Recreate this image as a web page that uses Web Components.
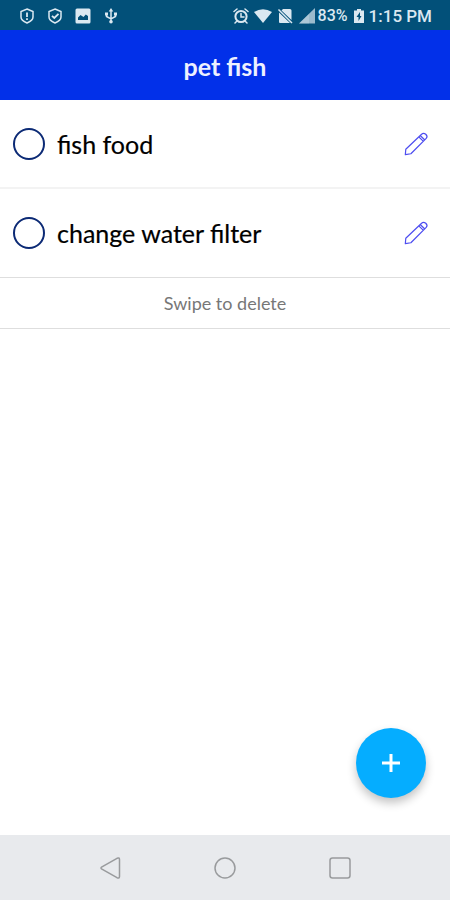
<!DOCTYPE html>
<html lang="en">
<head>
<meta charset="utf-8">
<meta name="viewport" content="width=device-width, initial-scale=1">
<title>pet fish</title>
<style>
html, body { height: 100%; margin: 0; }
body { background: #fff; font-family: Lato, "Open Sans", sans-serif; color: #000; }
</style>
</head>
<body>
<pet-app></pet-app>
<script>
const define = (name, html) => {
  const template = document.createElement('template');
  template.innerHTML = html;
  customElements.define(name, class extends HTMLElement {
    constructor() {
      super();
      this.attachShadow({ mode: 'open' }).append(template.content.cloneNode(true));
    }
  });
};

define('status-bar', `
<style>
:host { display: flex; justify-content: space-between; align-items: center; height: 30px; padding: 2px 18px 0 19px; box-sizing: border-box; background: #025079; color: #dbe8f1; font: 500 17px/20px Roboto, sans-serif; }
div { display: flex; align-items: center; }
.left { gap: 12px; }
svg { display: block; width: 16px; height: 16px; fill: none; stroke: currentColor; stroke-width: 1.5; }
.right svg { margin-right: 5px; }
.right .wifi { width: 18px; }
.right .signal { margin-right: 3px; }
.right .battery { width: 10px; margin: 0 5px 0 6px; }
.right .sim { margin-right: 6px; }
.pct { font-size: 16px; }
</style>
<div class="left">
  <svg viewBox="0 0 16 16"><path d="M8 1 14 3.5V9Q14 12.500 8 15Q2 12.500 2 9V3.500Z"/><path d="M8 4.500V9M8 10.300V12" stroke-width="1.800"/></svg>
  <svg viewBox="0 0 16 16"><path d="M8 1 14 3.500V9Q14 12.500 8 15Q2 12.500 2 9V3.500Z"/><path d="M5 7.800 7.300 10 11.500 5.800" stroke-width="1.800"/></svg>
  <svg viewBox="0 0 16 16"><path fill="currentColor" stroke="none" fill-rule="evenodd" d="M2 .5H14Q15.500 .5 15.500 2V14Q15.500 15.500 14 15.500H2Q.5 15.500 .5 14V2Q.5 .5 2 .5ZM3 12H13V8L10.800 6.500 8.500 9 5.500 7 3 9.500Z"/></svg>
  <svg viewBox="0 0 16 16"><path d="M8 2.500V13M3.500 6V8.500L8 11 12.500 8.500V6"/><path fill="currentColor" stroke="none" d="M8 0 10.300 3.500H5.700ZM2 4.500H5V7.500H2ZM11 4.500H14V7.500H11Z"/><circle cx="8" cy="13.800" r="1.800" fill="currentColor" stroke="none"/></svg>
</div>
<div class="right">
  <svg viewBox="0 0 16 16" stroke-linecap="round"><circle cx="8" cy="8.500" r="5.600" style="stroke-width:2"/><path d="M8 5.500V9H11M1 3.500 4 1M15 3.500 12 1M3.500 13.500 2 15M12.500 13.500 14 15"/></svg>
  <svg class="wifi" viewBox="0 0 18 16"><path fill="currentColor" stroke="none" d="M0 4Q9-1.500 18 4L9 15Z"/></svg>
  <svg class="sim" viewBox="0 0 16 16"><path fill="currentColor" stroke="none" d="M6 1H13Q14.500 1 14.500 2.500V12L4.500 2.500ZM2 4.500 13 15H3Q2 15 2 14Z"/><path d="M1.500 1.500 15 15"/></svg>
  <svg class="signal" viewBox="0 0 16 16"><path fill="currentColor" stroke="none" opacity=".7" d="M0 15.500 16 0V15.500Z"/><path fill="currentColor" stroke="none" d="M0 15.500 10 6V15.500Z" opacity=".3"/></svg>
  <span class="pct">83%</span>
  <svg class="battery" viewBox="0 0 10 16"><path fill="currentColor" stroke="none" fill-rule="evenodd" d="M3 1H7V2.500H10V15H0V2.500H3ZM6 4 2.500 9H4.500V13L7.500 8H6Z"/></svg>
  <span>1:15 PM</span>
</div>`);

define('title-bar', `
<style>
:host { display: flex; align-items: center; justify-content: center; height: 70px; background: #0230e9; color: #edf1ff; }
h1 { margin: 0; padding-top: 2px; font-size: 25px; line-height: 32px; font-weight: 700; }
</style>
<h1><slot></slot></h1>`);

define('task-row', `
<style>
:host { display: flex; align-items: center; justify-content: space-between; box-sizing: border-box; padding: 28px 20px 28px 13px; border-bottom: 1px solid #dedede; }
:host([divided]) { padding-bottom: 27px; border-bottom: 2px solid #f3f3f3; }
label { display: flex; align-items: center; gap: 12px; font-size: 25px; line-height: 32px; -webkit-text-stroke: 0.2px; }
input { appearance: none; width: 32px; height: 32px; margin: 0; border: 2px solid #0c2a75; border-radius: 50%; background: #fff; }
input:checked { background: #0230e9; box-shadow: inset 0 0 0 6px #fff; }
button { display: grid; place-items: center; width: 28px; height: 28px; padding: 0; border: 0; background: none; color: #4d4df0; }
svg { display: block; width: 26px; height: 26px; fill: none; stroke: currentColor; stroke-width: 1.3; stroke-linejoin: round; }
</style>
<label><input type="checkbox"><span><slot></slot></span></label>
<button type="button" aria-label="Edit"><svg viewBox="0 0 28 28"><path d="M2.500 25.500 3 19.700 20 3.500Q22 1.500 24.500 3.500Q27 6 25 8L8.500 24.500ZM17 6.300 22 11.200M18.500 4.800 23.500 9.700"/></svg></button>`);

define('swipe-hint', `
<style>
:host { display: block; padding: 13px 0; border-bottom: 1px solid #dedede; text-align: center; font-size: 18px; line-height: 24px; color: #777; }
</style>
<slot></slot>`);

define('add-button', `
<style>
:host { position: absolute; right: 24px; bottom: 37px; }
button { display: grid; place-items: center; width: 70px; height: 70px; padding: 0; border: 0; border-radius: 50%; background: #05adff; color: #fff; box-shadow: 0 5px 10px rgba(0,0,0,.24); }
svg { width: 20px; height: 20px; fill: none; stroke: currentColor; stroke-width: 3; }
</style>
<button type="button" aria-label="Add item"><svg viewBox="0 0 20 20"><path d="M10 1V19M1 10H19"/></svg></button>`);

define('nav-bar', `
<style>
:host { display: block; background: #e8eaed; }
nav { display: flex; justify-content: center; gap: 83px; padding: 17px 0 16px; }
button { display: block; padding: 0 4px; border: 0; background: none; color: #999b9d; }
svg { display: block; width: 24px; height: 32px; fill: none; stroke: currentColor; stroke-width: 1.500; stroke-linejoin: round; }
</style>
<nav aria-label="System">
<button type="button" aria-label="Back"><svg viewBox="0 -4 24 32"><path d="M3.500 11.200 19 2.300Q21.500 1.200 21.500 3.500V20.500Q21.500 22.800 19 21.700L3.500 12.800Q2.500 12 3.500 11.200Z"/></svg></button>
<button type="button" aria-label="Home"><svg viewBox="0 -4 24 32"><circle cx="12" cy="12" r="10"/></svg></button>
<button type="button" aria-label="Recent apps"><svg viewBox="0 -4 24 32"><rect x="2" y="2" width="20" height="20" rx="2.500"/></svg></button>
</nav>`);

define('pet-app', `
<style>
:host { display: flex; flex-direction: column; min-height: 100%; }
main { position: relative; flex: 1; }
</style>
<status-bar></status-bar>
<title-bar>pet fish</title-bar>
<main>
  <task-row divided>fish food</task-row>
  <task-row>change water filter</task-row>
  <swipe-hint>Swipe to delete</swipe-hint>
  <add-button></add-button>
</main>
<nav-bar></nav-bar>`);
</script>
</body>
</html>
